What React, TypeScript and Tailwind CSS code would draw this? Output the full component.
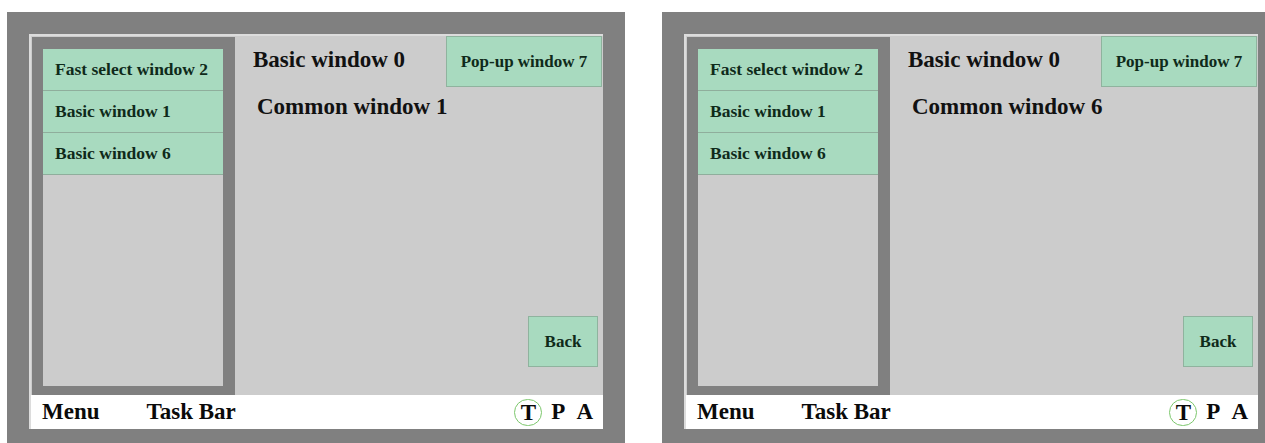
import React from "react";

const serif = { fontFamily: '"Liberation Serif", "Times New Roman", serif' };

function SideButton({ label }: { label: string }) {
  return (
    <div className="h-[42px] flex items-center pl-[12px] bg-[#a8dabf] border-b border-[#8fae9c] text-[17.5px] font-bold text-[#0f2a1a] leading-none whitespace-nowrap">
      {label}
    </div>
  );
}

function Screen({ common, prClass, widthClass }: { common: string; prClass: string; widthClass: string }) {
  return (
    <div className={`${widthClass} h-[431px] bg-[#808080] pl-[22px] pt-[22px] ${prClass} pb-[14px] shrink-0`}>
      <div className="h-[395px] flex flex-col bg-[#cccccc] border-t-2 border-l-2 border-[#dcdcdc]" style={serif}>
        <div className="flex-1 flex min-h-0">
          {/* sidebar */}
          <div className="ml-[1px] mt-[1px] w-[203px] bg-[#808080] pl-[11px] pr-[12px] pt-[12px] pb-[9px] flex">
            <div className="flex-1 bg-[#cccccc] flex flex-col">
              <SideButton label="Fast select window 2" />
              <SideButton label="Basic window 1" />
              <SideButton label="Basic window 6" />
            </div>
          </div>
          {/* main */}
          <div className="flex-1 flex flex-col">
            <div className="flex items-start justify-between">
              <div className="pl-[18px] mt-[11px] text-[23px] leading-[26px] font-bold text-[#111111] whitespace-nowrap">
                Basic window 0
              </div>
              <div className="mr-[1px] w-[156px] h-[51px] flex items-center justify-center bg-[#a8dabf] border border-[#8fb39e] text-[17px] font-bold text-[#0f2a1a] whitespace-nowrap">
                Pop-up window 7
              </div>
            </div>
            <div className="pl-[22px] mt-[7px] text-[23px] leading-[26px] font-bold text-[#111111] whitespace-nowrap">
              {common}
            </div>
            <div className="flex-1" />
            <div className="self-end mr-[5px] mb-[28px] w-[70px] h-[51px] flex items-center justify-center bg-[#a8dabf] border border-[#8fb39e] text-[17px] font-bold text-[#0f2a1a]">
              Back
            </div>
          </div>
        </div>
        {/* task bar */}
        <div className="h-[34px] bg-white flex items-center pl-[11px] pr-[10px] text-[23px] leading-[34px] font-bold text-[#0a0a0a]">
          <span>Menu</span>
          <span className="ml-[47px]">Task Bar</span>
          <div className="flex-1" />
          <div className="w-[28px] h-[27px] rounded-full border-[1.5px] border-[#7cc76c] flex items-center justify-center leading-none">
            <span className="mt-[1px]">T</span>
          </div>
          <span className="ml-[9px]">P</span>
          <span className="ml-[11px]">A</span>
        </div>
      </div>
    </div>
  );
}

export default function App() {
  return (
    <div className="w-[1265px] h-[443px] bg-white overflow-hidden flex pt-[12px] pl-[7px] gap-[37px]">
      <Screen common="Common window 1" prClass="pr-[22px]" widthClass="w-[618px]" />
      <Screen common="Common window 6" prClass="pr-[7px]" widthClass="w-[603px]" />
    </div>
  );
}
